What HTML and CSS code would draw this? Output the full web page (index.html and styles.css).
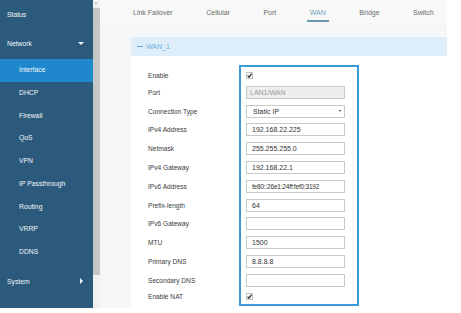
FILE: index.html
```html
<!DOCTYPE html>
<html lang="en">

<head>
  <meta charset="UTF-8">
  <meta name="viewport" content="width=device-width, initial-scale=1.0">
  <title>Interface - WAN</title>
  <link rel="stylesheet" href="styles.css">
</head>

<body>
  <div class="app">
    <nav class="sidebar">
      <div class="menu-item status">Status</div>
      <div class="menu-item network">Network <span class="caret-down"></span></div>
      <ul class="submenu">
        <li class="active">Interface</li>
        <li>DHCP</li>
        <li>Firewall</li>
        <li>QoS</li>
        <li>VPN</li>
        <li>IP Passthrough</li>
        <li>Routing</li>
        <li>VRRP</li>
        <li>DDNS</li>
      </ul>
      <div class="menu-item system">System <span class="caret-right"></span></div>
    </nav>

    <div class="scrollbar">
      <span class="scroll-arrow"></span>
      <div class="scroll-thumb"></div>
    </div>

    <main class="main">
      <div class="tabs">
        <span class="tab">Link Failover</span>
        <span class="tab">Cellular</span>
        <span class="tab">Port</span>
        <span class="tab active">WAN</span>
        <span class="tab">Bridge</span>
        <span class="tab">Switch</span>
      </div>

      <section class="panel">
        <div class="panel-head"><span class="minus"></span>WAN_1</div>

        <div class="form">
          <div class="labels">
            <div class="row first">Enable</div>
            <div class="row">Port</div>
            <div class="row">Connection Type</div>
            <div class="row">IPv4 Address</div>
            <div class="row">Netmask</div>
            <div class="row">IPv4 Gateway</div>
            <div class="row">IPv6 Address</div>
            <div class="row">Prefix-length</div>
            <div class="row">IPv6 Gateway</div>
            <div class="row">MTU</div>
            <div class="row">Primary DNS</div>
            <div class="row">Secondary DNS</div>
            <div class="row last">Enable NAT</div>
          </div>

          <div class="fields">
            <div class="row first">
              <svg class="check" width="7" height="7" viewBox="0 0 7 7">
                <rect x="0.5" y="0.5" width="6" height="6" fill="#fff" stroke="#c4c4c4" stroke-width="1"/>
                <path d="M1.6 3.6 L3 5.2 L5.6 1.6" fill="none" stroke="#333" stroke-width="1.3"/>
              </svg>
            </div>
            <div class="row"><div class="input disabled">LAN1/WAN</div></div>
            <div class="row"><div class="input select">Static IP<span class="select-arrow"></span></div></div>
            <div class="row"><div class="input">192.168.22.225</div></div>
            <div class="row"><div class="input">255.255.255.0</div></div>
            <div class="row"><div class="input">192.168.22.1</div></div>
            <div class="row"><div class="input narrow">fe80::26e1:24ff:fef0:3192</div></div>
            <div class="row"><div class="input">64</div></div>
            <div class="row"><div class="input"></div></div>
            <div class="row"><div class="input">1500</div></div>
            <div class="row"><div class="input">8.8.8.8</div></div>
            <div class="row"><div class="input"></div></div>
            <div class="row last">
              <svg class="check" width="7" height="7" viewBox="0 0 7 7">
                <rect x="0.5" y="0.5" width="6" height="6" fill="#fff" stroke="#c4c4c4" stroke-width="1"/>
                <path d="M1.6 3.6 L3 5.2 L5.6 1.6" fill="none" stroke="#333" stroke-width="1.3"/>
              </svg>
            </div>
          </div>
        </div>
      </section>
    </main>
  </div>
</body>

</html>
```

FILE: styles.css
```css
body {
  margin: 0;
  background-color: #fff;
  font-family: "Liberation Sans", Arial, sans-serif;
}

.app {
  display: flex;
  height: 308px;
  width: 461px;
}

/* sidebar */

.sidebar {
  width: 93px;
  flex-shrink: 0;
  background-color: #2c5a7c;
  color: #f2f6f9;
  font-size: 6.8px;
}

.menu-item {
  display: flex;
  align-items: center;
  justify-content: space-between;
  padding: 0 7px 0 7px;
}

.status {
  height: 28px;
}

.network {
  height: 31px;
}

.system {
  height: 33px;
  margin-top: 1px;
}

.caret-down {
  width: 0;
  height: 0;
  margin-right: 2px;
  border-left: 3px solid transparent;
  border-right: 3px solid transparent;
  border-top: 3px solid #f2f6f9;
}

.caret-right {
  width: 0;
  height: 0;
  margin-right: 3px;
  border-top: 3px solid transparent;
  border-bottom: 3px solid transparent;
  border-left: 3px solid #f2f6f9;
}

.submenu {
  list-style: none;
  margin: 0;
  padding: 0;
}

.submenu li {
  height: 22.75px;
  line-height: 22.75px;
  padding-left: 19px;
}

.submenu li.active {
  background-color: #1f88cc;
}

/* scrollbar strip */

.scrollbar {
  width: 7px;
  flex-shrink: 0;
  background-color: #f1f1f1;
  position: relative;
}

.scroll-thumb {
  margin-top: 8px;
  height: 267px;
  background-color: #c6c6c6;
}

.scroll-arrow {
  position: absolute;
  top: 2px;
  left: 2px;
  width: 0;
  height: 0;
  border-left: 1.5px solid transparent;
  border-right: 1.5px solid transparent;
  border-bottom: 2px solid #9a9a9a;
}

/* main */

.main {
  width: 347px;
  flex-shrink: 0;
  background-color: #f5f6f7;
}

.tabs {
  height: 25px;
  display: flex;
  align-items: center;
  gap: 33.5px;
  padding-left: 33px;
  background-color: #f8f8f8;
  font-size: 7px;
  color: #6b6b6b;
}

.tab {
  position: relative;
  white-space: nowrap;
}

.tab.active {
  color: #6fa0c0;
}

.tab.active::after {
  content: "";
  position: absolute;
  left: -3px;
  right: -3px;
  top: 11px;
  height: 2px;
  background-color: #6a96b0;
}

.panel {
  margin: 12px 0 0 31px;
  background-color: #fff;
  height: 271px;
}

.panel-head {
  height: 19px;
  display: flex;
  align-items: center;
  background-color: #ddeefa;
  color: #70b0dc;
  font-size: 7px;
}

.minus {
  width: 6px;
  height: 1.5px;
  margin: 0 3px 0 6px;
  background-color: #5ea4d4;
}

.form {
  display: flex;
  padding-top: 9px;
}

.labels {
  width: 91px;
  padding: 2px 0 0 17px;
  font-size: 6.6px;
  color: #3a3a3a;
}

.row {
  height: 18.8px;
  display: flex;
  align-items: center;
}

.row.first {
  height: 16px;
}

.row.last {
  height: 14px;
}

.fields {
  width: 120px;
  box-sizing: border-box;
  border: 2px solid #3d9ad8;
  padding: 0 12px 0 5px;
}

.check {
  display: block;
}

.input {
  position: relative;
  width: 99px;
  height: 13px;
  box-sizing: border-box;
  border: 1px solid #c9c9c9;
  padding-left: 5px;
  font-size: 7px;
  line-height: 11px;
  color: #333;
  white-space: nowrap;
  background-color: #fff;
}

.input.narrow {
  font-size: 6.5px;
  letter-spacing: -0.2px;
}

.input.disabled {
  background-color: #eeeeee;
  color: #9a9a9a;
  padding-left: 3px;
}

.input.select {
  padding-left: 6px;
}

.select-arrow {
  position: absolute;
  right: 3px;
  top: 4.5px;
  width: 0;
  height: 0;
  border-left: 1.5px solid transparent;
  border-right: 1.5px solid transparent;
  border-top: 2.5px solid #333;
}
```
